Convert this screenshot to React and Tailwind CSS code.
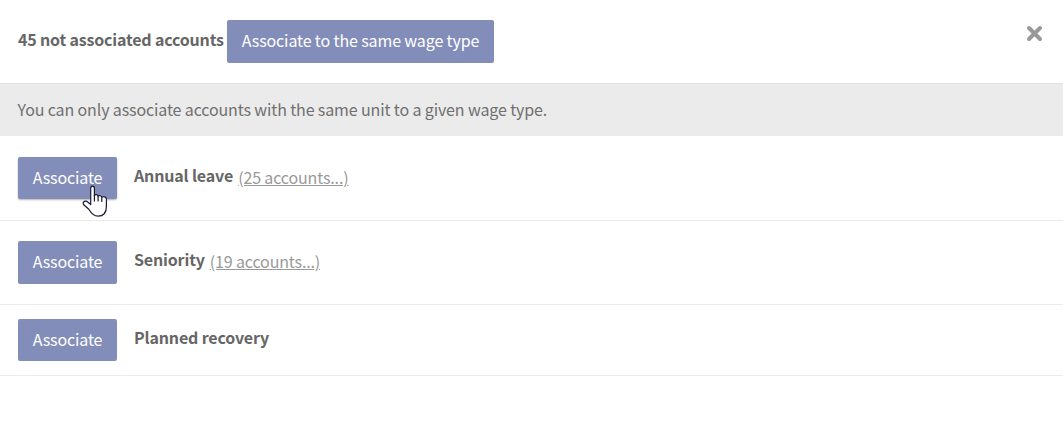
import React from 'react';

const accounts = [
    { name: 'Annual leave', link: '(25 accounts...)', row: 'h-[85px]', inner: 'pt-[21px]', button: 'h-[42px] pb-[2px] shadow-[0_1px_2px_rgba(0,0,0,0.3)]', hovered: true },
    { name: 'Seniority', link: '(19 accounts...)', row: 'h-[84px]', inner: 'pt-[20px]', button: 'h-[43px] pb-[3px]' },
    { name: 'Planned recovery', row: 'h-[71px]', inner: 'pt-[14px]', button: 'h-[42px] pb-[2px]' },
];

const HandCursor = () => (
    <svg className="absolute left-[64px] top-[27px]" width="26" height="34" viewBox="0 0 26 34">
        <path
            d="M8.700 20.500V4.200c0-2.900 3.700-2.900 3.700 0v7.300c.5-1.300 3.500-1.200 3.700.7.8-.9 3.300-.6 3.700 1 1.100-.8 4.600-.6 4.600 2v7.300c0 6-3 9.700-8.300 9.700-5.200 0-7.400-3.700-9.300-6.900L1.500 20.500c-1.300-3.200 2.200-4.400 4.300-2.500z"
            fill="#fff"
            stroke="#191932"
            strokeWidth="1.2"
            strokeLinejoin="round"
        />
        <path d="M12.400 11v6M16.100 12v5M19.800 13v4.500" stroke="#191932" strokeWidth="1.2" strokeLinecap="round" />
    </svg>
);

const AccountRow = ({ account }) => (
    <div className={`flex items-start border-b border-[#ebebeb] px-[18px] ${account.row} ${account.inner}`}>
        <div className="relative">
            <button className={`flex w-[99px] items-center justify-center rounded-[2px] bg-[#838db9] text-white ${account.button}`}>
                Associate
            </button>
            {account.hovered && <HandCursor />}
        </div>
        <div className="ml-[17px] flex h-[36px] items-center">
            <span className="font-bold tracking-[-0.16px]">{account.name}</span>
            {account.link && (
                <a href="#" className="ml-[5px] pt-[4px] tracking-[-0.14px] text-[#999] underline">
                    {account.link}
                </a>
            )}
        </div>
    </div>
);

const App = () => (
    <div className='h-[427px] w-full overflow-hidden bg-white font-["Noto_Sans_CJK_JP",sans-serif] text-[16px] leading-[24px] tracking-[-0.13px] text-[#666]'>
        <header className="flex h-[84px] items-start border-b border-[#e0e0e0] pl-[18px] pr-[20px] pt-[20px]">
            <span className="mt-[7px] w-[209px] whitespace-nowrap font-bold tracking-[-0.18px]">45 not associated accounts</span>
            <button className="flex h-[43px] w-[267px] items-center justify-center rounded-[2px] bg-[#838db9] pb-[3px] text-white">
                Associate to the same wage type
            </button>
            <button aria-label="Close" className="ml-auto mt-[5px]">
                <svg width="17" height="17" viewBox="0 0 17 17">
                    <path d="M3 3l11 11M14 3l-11 11" stroke="#999" strokeWidth="4" strokeLinecap="round" />
                </svg>
            </button>
        </header>

        <div className="flex h-[52px] items-center bg-[#ebebeb] px-[17.500px] pb-[2px] text-[#707070]">
            You can only associate accounts with the same unit to a given wage type.
        </div>

        {accounts.map((account) => (
            <AccountRow key={account.name} account={account} />
        ))}
    </div>
);

export default App;
